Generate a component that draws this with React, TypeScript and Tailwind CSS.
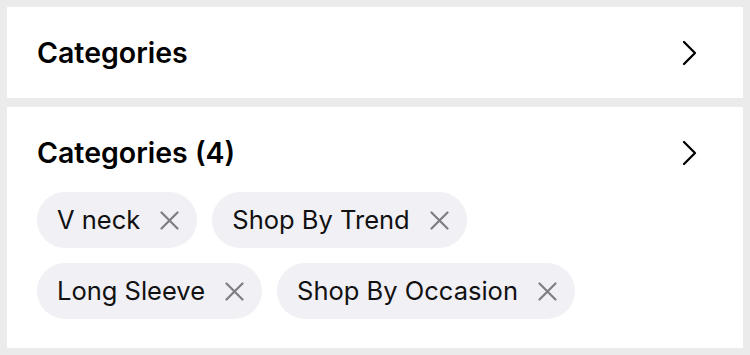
const chips = [
  ["V neck", "Shop By Trend"],
  ["Long Sleeve", "Shop By Occasion"],
]

function Chevron() {
  return (
    <svg width="16" height="26" viewBox="0 0 16 26" fill="none" className="text-black">
      <polyline points="2,2 13,13 2,24" stroke="currentColor" strokeWidth="2.3" strokeLinecap="round" strokeLinejoin="round" />
    </svg>
  )
}

function CloseIcon() {
  return (
    <svg width="19" height="19" viewBox="0 0 19 19" fill="none" className="ml-[20px] text-[#7d7d82]">
      <path d="M1.5 1.5 L17.5 17.5 M17.5 1.5 L1.5 17.5" stroke="currentColor" strokeWidth="2.2" strokeLinecap="round" />
    </svg>
  )
}

function Chip({ label }: { label: string }) {
  return (
    <div className="flex h-[56px] items-center rounded-full bg-[#f0f0f5] pl-[20px] pr-[18px]">
      <span className="text-[25.5px] leading-none text-[#111]">{label}</span>
      <CloseIcon />
    </div>
  )
}

export default function App() {
  return (
    <div
      className="flex h-[355px] w-[750px] flex-col gap-[9px] bg-[#ebebeb] p-[7px]"
      style={{ fontFamily: "Inter, 'Noto Sans', sans-serif" }}
    >
      <div className="flex items-center justify-between bg-white pb-[27px] pl-[30px] pr-[45px] pt-[28px]">
        <h2 className="text-[28.5px] font-semibold leading-[36px] text-black">Categories</h2>
        <Chevron />
      </div>
      <div className="flex flex-1 flex-col bg-white pl-[30px] pr-[45px] pt-[28px]">
        <div className="flex items-center justify-between">
          <h2 className="text-[28.5px] font-semibold leading-[36px] text-black">Categories (4)</h2>
          <Chevron />
        </div>
        <div className="mt-[21px] flex flex-col gap-[15px]">
          {chips.map((row, i) => (
            <div key={i} className="flex gap-[15px]">
              {row.map((c) => (
                <Chip key={c} label={c} />
              ))}
            </div>
          ))}
        </div>
      </div>
    </div>
  )
}
